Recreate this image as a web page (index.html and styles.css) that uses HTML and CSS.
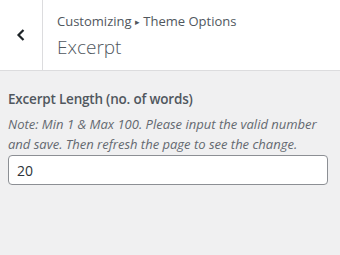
FILE: index.html
```html
<!DOCTYPE html>
<html lang="en">
  <head>
    <meta charset="UTF-8" />
    <title>Customizing Excerpt</title>
    <link rel="stylesheet" href="styles.css">
  </head>
  <body>
    <div class="section-head">
      <button class="back-btn" type="button" aria-label="Back">
        <svg width="12" height="14" viewBox="0 0 12 14">
          <path d="M8.5 2 L3.5 7 L8.5 12" fill="none" stroke="#1d2327" stroke-width="2.2" />
        </svg>
      </button>
      <div class="head-title">
        <span class="crumb">Customizing <span class="arrow">&#9656;</span> Theme Options</span>
        <h3 class="section-name">Excerpt</h3>
      </div>
    </div>

    <div class="control">
      <label class="control-label" for="excerpt-length">Excerpt Length (no. of words)</label>
      <p class="description">Note: Min 1 &amp; Max 100. Please input the valid number and save. Then refresh the page to see the change.</p>
      <input id="excerpt-length" class="text-input" type="text" value="20" />
    </div>
  </body>
</html>
```

FILE: styles.css
```css
body {
  margin: 0;
  background: #f0f0f1;
  font-family: "Open Sans", "Noto Sans", sans-serif;
  color: #50575e;
}

/* 상단 헤더 */
.section-head {
  display: flex;
  height: 70px;
  background: #fff;
  border-bottom: 1px solid #dcdcde;
}

.back-btn {
  width: 43px;
  padding: 0;
  border: none;
  border-right: 1px solid #dcdcde;
  background: #fff;
  display: flex;
  align-items: center;
  justify-content: center;
}

.head-title {
  padding: 12px 0 0 14px;
}

.crumb {
  display: block;
  font-size: 13px;
  line-height: 18px;
  color: #50575e;
}

.arrow {
  font-size: 9px;
  vertical-align: 1px;
}

.section-name {
  margin: 3px 0 0;
  font-size: 19px;
  font-weight: 300;
  line-height: 26px;
  color: #50575e;
}

/* 설정 항목 */
.control {
  padding: 18px 12px 0 8px;
}

.control-label {
  display: block;
  font-size: 13.5px;
  font-weight: 600;
  line-height: 20px;
  letter-spacing: -0.2px;
  color: #50575e;
}

.description {
  margin: 5px 0 1px;
  font-size: 13px;
  font-style: italic;
  line-height: 20px;
  color: #646970;
}

.text-input {
  box-sizing: border-box;
  width: 100%;
  height: 30px;
  padding: 0 8px;
  border: 1px solid #8c8f94;
  border-radius: 4px;
  background: #fff;
  font-family: "Open Sans", "Noto Sans", sans-serif;
  font-size: 14px;
  color: #2c3338;
}
```
